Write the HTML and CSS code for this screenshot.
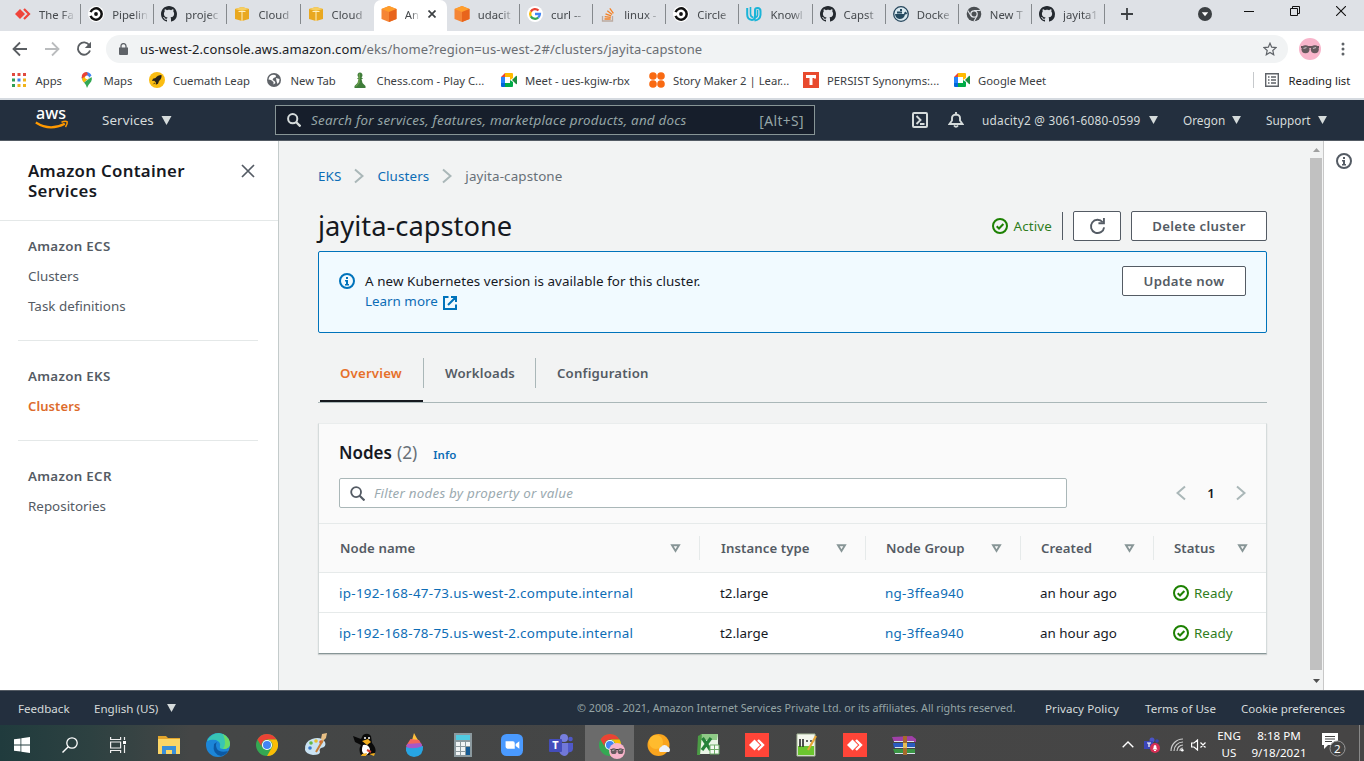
FILE: index.html
```html
<!DOCTYPE html>
<html lang="en">
<head>
<meta charset="utf-8">
<title>Amazon EKS - jayita-capstone</title>
<link rel="stylesheet" href="styles.css">
</head>
<body>
<svg class="defs" aria-hidden="true">
  <symbol id="github" viewBox="0 0 16 16"><path fill="#24292f" d="M8 0C3.58 0 0 3.58 0 8c0 3.54 2.29 6.53 5.47 7.59.4.07.55-.17.55-.38 0-.19-.01-.82-.01-1.49-2.01.37-2.53-.49-2.69-.94-.09-.23-.48-.94-.82-1.13-.28-.15-.68-.52-.01-.53.63-.01 1.08.58 1.23.82.72 1.21 1.87.87 2.33.66.07-.52.28-.87.51-1.07-1.78-.2-3.64-.89-3.64-3.95 0-.87.31-1.59.82-2.15-.08-.2-.36-1.02.08-2.12 0 0 .67-.21 2.2.82.64-.18 1.32-.27 2-.27s1.36.09 2 .27c1.53-1.04 2.2-.82 2.2-.82.44 1.1.16 1.92.08 2.12.51.56.82 1.27.82 2.15 0 3.07-1.87 3.75-3.65 3.95.29.25.54.73.54 1.48 0 1.07-.01 1.93-.01 2.2 0 .21.15.46.55.38A8.01 8.01 0 0 0 16 8c0-4.42-3.58-8-8-8z"/></symbol>
  <symbol id="circleci" viewBox="0 0 16 16"><circle cx="8" cy="8" r="8" fill="#fff"/><circle cx="8" cy="8" r="1.900" fill="#111"/><path d="M2.600 6.200a5.700 5.700 0 1 1 0 3.600" fill="none" stroke="#111" stroke-width="2.500"/></symbol>
  <symbol id="box" viewBox="0 0 16 16"><path fill="#e9a820" d="M1 3l7-2 7 2v10l-7 2-7-2z"/><path fill="#f6cf62" d="M1 3l7-2 7 2-7 2z"/><path d="M8 5v10M4.500 5.500h7" stroke="#fff0c0" stroke-width="1"/></symbol>
  <symbol id="cube" viewBox="0 0 16 16"><path fill="#f58536" d="M8 0l7.500 3v10L8 16 .5 13V3z"/><path fill="#ff9e2c" d="M8 0l7.500 3L8 6 .5 3z"/><path fill="#e8641b" d="M8 6l7.500-3v10L8 16z"/></symbol>
  <symbol id="meet" viewBox="0 0 16 14"><path fill="#1e8e3e" d="M11 7l4-4q1-.5 1 .5v7q0 1-1 .5z"/><path fill="#2684fc" d="M0 4h4v6H0z"/><path fill="#ea4335" d="M0 4l4-4v4z"/><path fill="#ffba00" d="M4 0h7q1 0 1 1v4l-3 2V4H4z"/><path fill="#00ac47" d="M4 10h5V7l3 2v4q0 1-1 1H4z"/><path fill="#0066da" d="M0 10h4v4H1q-1 0-1-1z"/></symbol>
  <symbol id="ok" viewBox="0 0 16 16"><circle cx="8" cy="8" r="7" fill="none" stroke="#1d8102" stroke-width="2"/><path d="M4.700 8.300l2.300 2.200 4.400-4.500" fill="none" stroke="#1d8102" stroke-width="2"/></symbol>
  <symbol id="info" viewBox="0 0 16 16"><circle cx="8" cy="8" r="7" fill="none" stroke="currentColor" stroke-width="2"/><path fill="currentColor" d="M7 4h2v2H7zM6 7h3v4h1v1.500H6V11h1V8.500H6z"/></symbol>
  <symbol id="sort" viewBox="0 0 10 9"><path d="M1.500 1.300h7L5 7z" fill="none" stroke="#879596" stroke-width="1.900"/></symbol>
  <symbol id="caret" viewBox="0 0 10 9"><path d="M0 0h10L5 9z" fill="#d5dbdb"/></symbol>
  <symbol id="right" viewBox="0 0 10 16"><path d="M1 1.500L8.500 8 1 14.500" fill="none" stroke="#aab7b8" stroke-width="2"/></symbol>
  <symbol id="chrome" viewBox="0 0 24 24"><circle cx="12" cy="12" r="12" fill="#34a853"/><path fill="#ea4335" d="M1.600 6A12 12 0 0 1 22.400 6H12a6 6 0 0 0-5.200 9z"/><path fill="#fbbc05" d="M22.400 6A12 12 0 0 1 12 24l5.200-9A6 6 0 0 0 12 6z"/><circle cx="12" cy="12" r="5.500" fill="#fff"/><circle cx="12" cy="12" r="4.400" fill="#4285f4"/></symbol>
  <symbol id="shades" viewBox="0 0 22 22"><circle cx="11" cy="11" r="11" fill="#f8b5cb"/><path d="M2 9h18" stroke="#3b3035" stroke-width="1.500"/><circle cx="6.500" cy="11.200" r="4" fill="#66595e"/><circle cx="15.800" cy="11.200" r="4" fill="#66595e"/><path d="M4.500 10.500l3-1M14 10.500l3-1" stroke="#c5bbc0" stroke-width="1.300"/></symbol>
  <symbol id="anydesk" viewBox="0 0 24 24"><path fill="#ff4538" d="M0 0h24v24H0z"/><path fill="#fff" d="M4 12l5.500-5.500L15 12l-5.500 5.500z"/><path d="M13 7l5 5-5 5" fill="none" stroke="#fff" stroke-width="2.400"/></symbol>
</svg>

<header class="tabstrip">
  <div class="tab"><svg class="fav" viewBox="0 0 16 16"><path fill="#ef443b" d="M0 8l5-5 5 5-5 5z"/><path d="M9 3l5 5-5 5" fill="none" stroke="#ef443b" stroke-width="2.200"/></svg><span>The Fa</span></div>
  <div class="tab"><svg class="fav"><use href="#circleci"/></svg><span>Pipelin</span></div>
  <div class="tab"><svg class="fav"><use href="#github"/></svg><span>projec</span></div>
  <div class="tab"><svg class="fav"><use href="#box"/></svg><span>Cloud</span></div>
  <div class="tab before-active"><svg class="fav"><use href="#box"/></svg><span>Cloud</span></div>
  <div class="tab active"><svg class="fav"><use href="#cube"/></svg><span>An</span><svg class="tab-close" viewBox="0 0 8 8"><path d="M.5.5l7 7M7.500.5l-7 7" stroke="#3c4043" stroke-width="1.700"/></svg></div>
  <div class="tab"><svg class="fav"><use href="#cube"/></svg><span>udacit</span></div>
  <div class="tab"><svg class="fav" viewBox="0 0 16 16"><circle cx="8" cy="8" r="8" fill="#fff"/><g fill="none" stroke-width="2.300"><path stroke="#ea4335" d="M3.800 5.600A4.900 4.900 0 0 1 11.500 4.500"/><path stroke="#fbbc05" d="M3.800 5.600a4.900 4.900 0 0 0 0 4.800"/><path stroke="#34a853" d="M3.800 10.400a4.900 4.900 0 0 0 7.400 1.200"/><path stroke="#4285f4" d="M11.200 11.600A4.900 4.900 0 0 0 12.900 8H8"/></g></svg><span>curl --</span></div>
  <div class="tab"><svg class="fav" viewBox="0 0 16 16"><path d="M2.500 10v5h10v-5" fill="none" stroke="#bcaaa0" stroke-width="1.300"/><path d="M4.500 13h6.200M4.700 10.600l6.100.8M5.500 7.800l5.700 2M7.300 4.800l4.800 3.800M9.800 2.300l3.600 5" stroke="#f48024" stroke-width="1.300"/></svg><span>linux -</span></div>
  <div class="tab"><svg class="fav"><use href="#circleci"/></svg><span>Circle</span></div>
  <div class="tab"><svg class="fav" viewBox="0 0 16 16"><path d="M1.200 2v6.500q0 5 4.800 5.500 3-.5 3-3V4q0-2 2.500-2 3 .2 3 3v4q-.5 5-6 5.500" fill="none" stroke="#1ab4d8" stroke-width="2"/><path d="M4.500 1v7q0 3 3 3.500M11.500 4v5q0 2-3 3" fill="none" stroke="#1ab4d8" stroke-width="1.600"/></svg><span>Knowl</span></div>
  <div class="tab"><svg class="fav"><use href="#github"/></svg><span>Capst</span></div>
  <div class="tab"><svg class="fav" viewBox="0 0 16 16"><circle cx="8" cy="8" r="7.300" fill="#d9e8ef" stroke="#27475d" stroke-width="1.300"/><path fill="#254a60" d="M2 8h9q0-2 1.500-2.500.5 1 2 1.500-1 1.500-2.500 1.500Q11 13 6.500 13 2.500 12.500 2 8zM4 5.500h5v2H4zM7 3h2v2H7z"/></svg><span>Docke</span></div>
  <div class="tab"><svg class="fav" viewBox="0 0 16 16"><circle cx="8" cy="8" r="7.300" fill="#4b4f53"/><circle cx="8" cy="8" r="3.200" fill="#4b4f53" stroke="#dee1e6" stroke-width="1.300"/><path d="M8 4.500h6.500M5 9.700L1.700 4.500M11 9.700L8 15.300" stroke="#dee1e6" stroke-width="1.200"/></svg><span>New T</span></div>
  <div class="tab"><svg class="fav"><use href="#github"/></svg><span>jayita1</span></div>
  <svg class="newtab" viewBox="0 0 12 12"><path d="M6 0v12M0 6h12" stroke="#3c4043" stroke-width="1.800"/></svg>
  <div class="winctl">
    <svg class="w14" viewBox="0 0 14 14"><circle cx="7" cy="7" r="7" fill="#3c4043"/><path fill="#fff" d="M3.800 5.200h6.400L7 9.300z"/></svg>
    <svg class="w10" viewBox="0 0 10 10"><path d="M0 5.500h10" stroke="#111"/></svg>
    <svg class="w10" viewBox="0 0 10 10"><path d="M.5 2.500h7v7h-7zM2.500 2.500v-2h7v7h-2" fill="none" stroke="#111"/></svg>
    <svg class="w10" viewBox="0 0 10 10"><path d="M0 0l10 10M10 0L0 10" stroke="#111" stroke-width="1.100"/></svg>
  </div>
</header>

<div class="toolbar">
  <div class="nav">
    <svg viewBox="0 0 16 16"><path d="M15 8H2M8 1.500L1.500 8 8 14.500" fill="none" stroke="#5a5e62" stroke-width="1.800"/></svg>
    <svg viewBox="0 0 16 16"><path d="M1 8h13M8 1.500L14.500 8 8 14.500" fill="none" stroke="#babcbe" stroke-width="1.800"/></svg>
    <svg viewBox="0 0 16 16"><path d="M13.200 4A6.200 6.200 0 1 0 14 9.500" fill="none" stroke="#5a5e62" stroke-width="1.900"/><path fill="#5a5e62" d="M15 .8V7H8.800z"/></svg>
  </div>
  <div class="omnibox">
    <svg class="lock" viewBox="0 0 9 12"><path fill="#5f6368" d="M0 4.500h9V11q0 1-1 1H1q-1 0-1-1z"/><path d="M2 5V3a2.500 2.400 0 0 1 5 0v2" fill="none" stroke="#5f6368" stroke-width="1.300"/></svg>
    <span class="url"><b>us-west-2.console.aws.amazon.com</b>/eks/home?region=us-west-2#/clusters/jayita-capstone</span>
    <svg class="star" viewBox="0 0 14 14"><path d="M7 1.200l1.700 4 4.300.4-3.200 2.900.9 4.200L7 10.500l-3.700 2.200.9-4.200L1 5.600l4.300-.4z" fill="none" stroke="#5f6368" stroke-width="1.200"/></svg>
  </div>
  <svg class="avatar"><use href="#shades"/></svg>
  <svg class="dots" viewBox="0 0 4 14"><circle cx="2" cy="2" r="1.500" fill="#5f6368"/><circle cx="2" cy="7" r="1.500" fill="#5f6368"/><circle cx="2" cy="12" r="1.500" fill="#5f6368"/></svg>
</div>

<nav class="bookmarks">
  <a><svg class="i14" viewBox="0 0 14 14"><path fill="#e04a3f" d="M0 0h3v3H0zM5.500 0h3v3h-3zM11 0h3v3h-3z"/><path fill="#2f9e54" d="M0 5.500h3v3H0zM0 11h3v3H0z"/><path fill="#3d7fe8" d="M5.500 5.500h3v3h-3z"/><path fill="#efb41c" d="M11 5.500h3v3h-3zM5.500 11h3v3h-3zM11 11h3v3h-3z"/></svg><span>Apps</span></a>
  <a><svg class="i14" viewBox="0 0 14 16"><path fill="#34a853" d="M7 16q-.5-3-3-5.500L11.500 5q1 2-.3 4.500Q8 13 7 16z"/><path fill="#4285f4" d="M6 0q4 0 5.500 3.500L4 10.500 1.500 6z"/><path fill="#ea4335" d="M1.700 5.500Q1.500.500 6.500 0L8 2 3 7z"/><path fill="#fbbc04" d="M2 6.500L6 4l3 2-5 4.500q-2-2-2-4z"/><circle cx="7" cy="5.300" r="1.900" fill="#fff"/></svg><span>Maps</span></a>
  <a><svg class="i16" viewBox="0 0 16 16"><circle cx="8" cy="8" r="8" fill="#fbbd12"/><path fill="#2a2418" d="M12.500 3q-4 0-6 3L4 6.700 3 9l2.200-.2 1.800 1.700-.2 2.300 2.200-1L10 9q3-2.500 2.500-6zM3.500 12.500l2.500-2 .5.7z"/></svg><span>Cuemath Leap</span></a>
  <a><svg class="i14" viewBox="0 0 14 14"><circle cx="7" cy="7" r="7" fill="#5f6368"/><path fill="#fff" d="M1.500 6.500Q2 2.500 6 1.700L8.500 2l.5 2-2.500 1-1 2 2 1 1 2-2 1.500V9L4 7zM9 5l3.500 1q.3 3-2 5L9.500 8z"/></svg><span>New Tab</span></a>
  <a><svg class="i14" viewBox="0 0 14 16"><path fill="#3f7d3a" d="M4.500 3a2.500 2.700 0 1 1 4 2.300L10 7H8.500l1 4 3 3v2h-11v-2l3-3 1-4H4l1.500-1.700Q4.500 4.500 4.500 3z"/><path fill="#8fba5c" d="M6 1.500l1 .5-.5 9-3 3.500H2l3-3z" opacity=".6"/></svg><span>Chess.com - Play C...</span></a>
  <a><svg class="i16"><use href="#meet"/></svg><span>Meet - ues-kgiw-rbx</span></a>
  <a><svg class="i16" viewBox="0 0 16 16" fill="#f96a12"><circle cx="4" cy="4" r="3.800"/><circle cx="12" cy="4" r="3.800"/><circle cx="4" cy="12" r="3.800"/><circle cx="12" cy="12" r="3.800"/></svg><span>Story Maker 2 | Lear...</span></a>
  <a><svg class="i16" viewBox="0 0 16 16"><path fill="#e84a2e" d="M0 0h16v16H0z"/><path fill="#fff" d="M3 3h10v3.500h-2V6H9.500v7h-3V6H3z"/></svg><span>PERSIST Synonyms:...</span></a>
  <a><svg class="i16"><use href="#meet"/></svg><span>Google Meet</span></a>
  <a class="reading"><svg class="i14" viewBox="0 0 14 14"><path d="M.7.7h12.600v12.600H.7z" fill="none" stroke="#5f6368" stroke-width="1.400"/><path d="M3 4h1.500M3 7h1.500M3 10h1.500M6 4h5M6 7h5M6 10h5" stroke="#5f6368" stroke-width="1.300"/></svg><span>Reading list</span></a>
</nav>

<div class="aws-nav">
  <svg class="aws-logo" viewBox="0 0 34 22"><text x="1" y="10" textLength="30" lengthAdjust="spacingAndGlyphs" class="aws-word">aws</text><path d="M.8 13.500q14 9 29 1.200" fill="none" stroke="#f90" stroke-width="2.100"/><path d="M26.500 13.200q4-1.500 5.700-.4.400 2.200-1.700 5.200" fill="none" stroke="#f90" stroke-width="1.500"/></svg>
  <span class="services">Services</span><svg class="caret big"><use href="#caret"/></svg>
  <div class="aws-search">
    <svg class="mag" viewBox="0 0 14 14"><circle cx="5.700" cy="5.700" r="4.600" fill="none" stroke="#d5dbdb" stroke-width="2"/><path d="M9 9l4.500 4.500" stroke="#d5dbdb" stroke-width="2.300"/></svg>
    <span>Search for services, features, marketplace products, and docs</span><kbd>[Alt+S]</kbd>
  </div>
  <svg class="shell" viewBox="0 0 16 16"><rect x="1" y="1" width="14" height="14" rx="1" fill="none" stroke="#d5dbdb" stroke-width="2"/><path d="M4.500 4l4 4-4 4M8 12h4.500" fill="none" stroke="#d5dbdb" stroke-width="1.900"/></svg>
  <svg class="bell" viewBox="0 0 16 16"><path d="M1.500 12h13L12 8.500V6q0-3-4-3.500Q4 3 4 6v2.500zM8 0v2.500M6 13.500q2 2.500 4 0" fill="none" stroke="#d5dbdb" stroke-width="1.900"/></svg>
  <div class="menu m1"><span>udacity2 @ 3061-6080-0599</span><svg class="caret"><use href="#caret"/></svg></div>
  <div class="menu m2"><span>Oregon</span><svg class="caret"><use href="#caret"/></svg></div>
  <div class="menu m3"><span>Support</span><svg class="caret"><use href="#caret"/></svg></div>
</div>

<div class="console">
  <aside class="sidebar">
    <div class="side-head"><h2>Amazon Container<br>Services</h2><svg viewBox="0 0 14 14"><path d="M1 1l12 12M13 1L1 13" stroke="#545b64" stroke-width="1.700"/></svg></div>
    <section><h3>Amazon ECS</h3><a>Clusters</a><a>Task definitions</a></section>
    <section><h3>Amazon EKS</h3><a class="current">Clusters</a></section>
    <section><h3>Amazon ECR</h3><a>Repositories</a></section>
  </aside>

  <main>
    <div class="crumbs"><a>EKS</a><svg><use href="#right"/></svg><a>Clusters</a><svg><use href="#right"/></svg><span>jayita-capstone</span></div>
    <div class="title-row">
      <h1>jayita-capstone</h1>
      <div class="status active-status"><svg><use href="#ok"/></svg><span>Active</span></div>
      <button class="btn refresh"><svg viewBox="0 0 18 18"><path d="M14.500 4.500A7 7 0 1 0 16 9.800" fill="none" stroke="#545b64" stroke-width="2"/><path d="M15.800 0v5.500H10" fill="none" stroke="#545b64" stroke-width="2"/></svg></button>
      <button class="btn delete"><span>Delete cluster</span></button>
    </div>
    <div class="alert">
      <svg class="alert-icon"><use href="#info"/></svg>
      <div class="alert-text"><p>A new Kubernetes version is available for this cluster.</p><a>Learn more<svg viewBox="0 0 16 16"><path d="M6.500 2H2v12h12V9.500M9 2h5v5M14 2L6 10" fill="none" stroke="#0073bb" stroke-width="2"/></svg></a></div>
      <button class="btn update"><span>Update now</span></button>
    </div>
    <div class="page-tabs"><div class="on">Overview</div><div>Workloads</div><div>Configuration</div></div>

    <div class="card">
      <div class="card-head">
        <div class="nodes"><h2>Nodes</h2><span class="count">(2)</span><a>Info</a></div>
        <div class="filter-row">
          <div class="filter"><svg viewBox="0 0 14 14"><circle cx="5.700" cy="5.700" r="4.600" fill="none" stroke="#545b64" stroke-width="1.700"/><path d="M9 9l4.500 4.500" stroke="#545b64" stroke-width="2"/></svg><span>Filter nodes by property or value</span></div>
          <div class="pager"><svg class="flip"><use href="#right"/></svg><b>1</b><svg><use href="#right"/></svg></div>
        </div>
      </div>
      <div class="row head">
        <div><span>Node name</span><svg><use href="#sort"/></svg></div><div><span>Instance type</span><svg><use href="#sort"/></svg></div><div><span>Node Group</span><svg><use href="#sort"/></svg></div><div><span>Created</span><svg><use href="#sort"/></svg></div><div><span>Status</span><svg><use href="#sort"/></svg></div>
      </div>
      <div class="row"><a>ip-192-168-47-73.us-west-2.compute.internal</a><div>t2.large</div><a>ng-3ffea940</a><div>an hour ago</div><div class="status"><svg><use href="#ok"/></svg><span>Ready</span></div></div>
      <div class="row"><a>ip-192-168-78-75.us-west-2.compute.internal</a><div>t2.large</div><a>ng-3ffea940</a><div>an hour ago</div><div class="status"><svg><use href="#ok"/></svg><span>Ready</span></div></div>
    </div>
  </main>
  <div class="scrollbar"><svg viewBox="0 0 7 4"><path fill="#a0a0a0" d="M0 4h7L3.500 0z"/></svg><div class="thumb"></div><svg viewBox="0 0 7 4"><path fill="#505050" d="M0 0h7L3.500 4z"/></svg></div>
  <div class="help"><svg><use href="#info"/></svg></div>
</div>

<footer class="aws-foot">
  <span class="f1">Feedback</span><span class="f2">English (US)</span><svg class="caret"><use href="#caret"/></svg>
  <span class="copy">© 2008 - 2021, Amazon Internet Services Private Ltd. or its affiliates. All rights reserved.</span>
  <span class="f3">Privacy Policy</span><span class="f4">Terms of Use</span><span class="f5">Cookie preferences</span>
</footer>

<div class="taskbar">
  <div class="sys">
    <svg class="t16" viewBox="0 0 16 16"><path fill="#fff" d="M0 2.300l6.500-.9v6.100H0zM7.300 1.300L16 0v7.500H7.300zM0 8.400h6.500v6.200L0 13.700zM7.300 8.400H16V16l-8.700-1.300z"/></svg>
    <svg class="t16" viewBox="0 0 16 16"><circle cx="10" cy="6" r="5.200" fill="none" stroke="#fff" stroke-width="1.300"/><path d="M6.300 9.800L.500 15.500" stroke="#fff" stroke-width="1.400"/></svg>
    <svg class="t16" viewBox="0 0 16 16"><path d="M.600 0v2.500h10V0M.6 16v-2.500h10V16M.6 5h10v6H.6zM14.500 0v3M14.500 8v8" fill="none" stroke="#eee" stroke-width="1.200"/><path fill="#fff" d="M13 4h3v3h-3z"/></svg>
  </div>
  <div class="apps">
    <div><svg viewBox="0 0 24 24"><path fill="#e2a52c" d="M1 3h8l2 2h12v4H1z"/><path fill="#fbd667" d="M1 6h22v15H1z"/><path fill="#3a8fd9" d="M5 13h14v8h-4v-4H9v4H5z"/></svg></div>
    <div><svg viewBox="0 0 24 24"><circle cx="12" cy="12" r="12" fill="#1c86d8"/><path fill="#38c5b4" d="M1 8Q5 0 13 0q9 1 11 10 0 6-7 6-4 0-3-3 1-4-4-6-5-1-9 1z"/><path fill="#6cdb66" d="M17 1q7 4 7 10 0 5-7 5 4-5 0-15z"/><path fill="#0c59a4" d="M8 11q-2 10 7 12 5-1 7-5-8 2-11-2-2-4 0-7z"/></svg></div>
    <div><svg class="a22"><use href="#chrome"/></svg></div>
    <div><svg viewBox="0 0 24 24"><path fill="#c9e2f2" d="M1 17Q0 9 8 6q9-3 13 3 2 5-4 6-2 1-1 4 0 3-7 3-7-1-8-5z"/><circle cx="7" cy="10" r="1.800" fill="#62b84a"/><circle cx="12" cy="8" r="1.800" fill="#e5bf2c"/><circle cx="17" cy="9" r="1.800" fill="#e35c35"/><circle cx="6" cy="15" r="1.800" fill="#3779cc"/><path d="M12 19l7-12" stroke="#c77c36" stroke-width="2"/><path fill="#e7bf85" d="M17 6l1-5 5-1-1 5-3 3z"/></svg></div>
    <div><svg viewBox="0 0 24 24"><path fill="#0a0a0a" d="M0 3l8 3 2-4q5-3 8 1l1 7q5 6 3 10l-4 2H8q-3-5 0-10L2 9z"/><path fill="#fff" d="M10 12q5-1 7 4-1 6-5 6-5-3-2-10z"/><path fill="#f2ae1e" d="M9 8l6-2 3 3-4 3zM9 21l5-1-1 3H8zM16 21l6-1-1 3z"/><circle cx="12" cy="5" r="1" fill="#fff"/><circle cx="16" cy="5" r="1" fill="#fff"/><path d="M14 17l4 2" stroke="#d43f31" stroke-width="2"/></svg></div>
    <div><svg viewBox="0 0 24 24"><path fill="#ffbf3b" d="M12 0q2 4 4 7l-8 3q3-4 4-10z"/><path fill="#f3655d" d="M8.500 6L17 7l3 5-14 3-2-2z"/><path fill="#a957c7" d="M5 11l14-1 2 5-17 3z"/><path fill="#27a5e3" d="M4 14q7 3 17-1 1 10-9 11-9-1-8-10z"/></svg></div>
    <div><svg viewBox="0 0 24 24"><path fill="#8b999e" d="M3 0h18v24H3z"/><path fill="#51cbe1" d="M5 2h14v5H5z"/><path fill="#f0f4f5" d="M5 9h4v4H5zM10 9h4v4h-4zM15 9h4v4h-4zM5 14h4v4H5zM10 14h4v4h-4zM5 19h4v3H5zM10 19h4v3h-4z"/><path fill="#155b94" d="M15 14h4v8h-4z"/></svg></div>
    <div><svg class="a22" viewBox="0 0 24 24"><rect width="24" height="24" rx="6" fill="#4a9aff"/><path fill="#fff" d="M5 8h8q2 0 2 2v6H7q-2 0-2-2zM16 11l4-3v8l-4-3z"/></svg></div>
    <div><svg viewBox="0 0 24 24"><circle cx="15" cy="5" r="4" fill="#777fdf"/><circle cx="21.500" cy="6" r="2.300" fill="#5059c9"/><path fill="#7178d9" d="M10 10h10v8q-1 5-5 5-4-1-5-5z"/><path fill="#5059c9" d="M19 10h5v6q-1 4-5 3z"/><rect y="6" width="13" height="13" rx="1" fill="#444dbb"/><text x="3.300" y="16" class="teams-t">T</text></svg></div>
    <div class="open"><svg class="a22"><use href="#chrome"/></svg><svg class="mini"><use href="#shades"/></svg></div>
    <div><svg viewBox="0 0 24 24"><circle cx="11.500" cy="12" r="11" fill="#f9a51e"/><circle cx="9" cy="9" r="7" fill="#ffbb2e"/><path fill="#edf3fa" d="M13 19a3 3 0 0 1 1-5 4 4 0 0 1 7 0 3 3 0 0 1 1 5z"/></svg></div>
    <div><svg viewBox="0 0 24 24"><path fill="#e9f5e6" d="M5 1h17v20H2z"/><path fill="#8fcb87" d="M5 1h17l-1 6H4z"/><path fill="#4b9c45" d="M2 3l4-2-2 21H1z"/><path d="M6.500 5l8 12M15 5L6 17" stroke="#26823a" stroke-width="3.200"/><path fill="#f4faf2" d="M14 12h9v9h-9z"/><path d="M14 12h9v9h-9zM14 16.500h9M18.500 12v9" fill="none" stroke="#6ead68"/></svg></div>
    <div><svg><use href="#anydesk"/></svg></div>
    <div><svg viewBox="0 0 24 24"><path fill="#f4f7ed" d="M3 1h18v22H3z"/><path fill="#6bc52e" d="M4 13h16v9H4z"/><path d="M3 1h18v22H3z" fill="none" stroke="#a9bb9b"/><path d="M6 6v8M9 6v8M12 8h2M16 8h2" stroke="#333" stroke-width="1.700"/><path d="M14 17l8-14" stroke="#e7a636" stroke-width="2.200"/></svg></div>
    <div><svg><use href="#anydesk"/></svg></div>
    <div><svg viewBox="0 0 24 24"><path fill="#a040a8" d="M0 4l20-1 4 3v3H2z"/><path fill="#2b5bc0" d="M1 10h22v5H2z"/><path fill="#3a9444" d="M1 16h22v5H3z"/><path d="M2 8.500h20M3 14.500h20M3 20.500h20" stroke="#d9e2ef" stroke-width="1.200"/><path fill="#a76a2b" d="M11 3h4v19h-4z"/><path fill="#e4bd56" d="M11 10h4v5h-4z"/></svg></div>
  </div>
  <div class="tray">
    <svg class="up" viewBox="0 0 12 7"><path d="M.7 6.300L6 1l5.300 5.300" fill="none" stroke="#fff" stroke-width="1.400"/></svg>
    <svg class="tm" viewBox="0 0 16 16"><circle cx="8" cy="3" r="2.500" fill="#4a54c8"/><circle cx="13" cy="4" r="1.800" fill="#3942ae"/><path fill="#3b46b8" d="M0 4h9v8H0z"/><path d="M3 6h4M5 6v4" stroke="#fff" stroke-width="1.200"/><circle cx="11" cy="11" r="5" fill="#d62f55"/><path fill="#fff" d="M8.500 12.500l1-1.500q0-3 1.500-3t1.500 3l1 1.500zM10 13h2v1h-2z"/></svg>
    <svg class="wifi" viewBox="0 0 14 14"><path d="M1 13A12 12 0 0 1 13 1M4 13a9 9 0 0 1 9-9M7 13a6 6 0 0 1 6-6M10 13a3 3 0 0 1 3-3" fill="none" stroke="#ccc" stroke-width="1.200"/><circle cx="12.300" cy="12.300" r="1.300" fill="#fff"/></svg>
    <svg class="vol" viewBox="0 0 15 12"><path d="M.6 4v4H3l3.500 3V1L3 4zM9.500 3.500l5 5M14.500 3.500l-5 5" fill="none" stroke="#fff" stroke-width="1.200"/></svg>
    <div class="lang">ENG<br>US</div>
    <div class="clock">8:18 PM<br>9/18/2021</div>
    <div class="notes"><svg viewBox="0 0 24 24"><path fill="#fff" d="M0 0h16v12H6l-4 4v-4H0z"/><path d="M3 3.500h10M3 6h10M3 8.500h7" stroke="#444" stroke-width="1.100"/><circle cx="15.500" cy="15.500" r="7.500" fill="#444" stroke="#999"/></svg><span>2</span></div>
    <div class="peek"></div>
  </div>
</div>
</body>
</html>
```
FILE: styles.css
```css
* { box-sizing: border-box; }
body { margin: 0; width: 1364px; height: 761px; overflow: hidden; display: flex; flex-direction: column; font-family: "Noto Sans", "Open Sans", sans-serif; font-size: 13.4px; color: #16191f; background: #fff; }
h1, h2, h3, p { margin: 0; }
svg { display: block; flex: none; }
.defs { width: 0; height: 0; position: absolute; }
a { color: #0d6db6; }
span, a, h1, h2, h3, p { white-space: nowrap; }

/* browser tabs */
.tabstrip { height: 31px; flex: none; background: #dee1e6; display: flex; padding-left: 8px; }
.tab { width: 73.150px; height: 31px; display: flex; align-items: center; padding: 0 0 3px 7px; gap: 8px; position: relative; font-size: 11.300px; color: #45494d; flex: none; }
.tab::after { content: ""; width: 1px; height: 20px; background: #85898d; position: absolute; right: 0; top: 4px; }
.tab.active::after, .tab.before-active::after { display: none; }
.tab span { width: 40px; -webkit-mask-image: linear-gradient(90deg, #000 55%, transparent 92%); mask-image: linear-gradient(90deg, #000 55%, transparent 92%); }
.tab.active { background: #fff; border-radius: 7px 7px 0 0; }
.tab.active span { width: 15px; -webkit-mask-image: linear-gradient(90deg, #000 40%, transparent); mask-image: linear-gradient(90deg, #000 40%, transparent); }
.fav { width: 16px; height: 16px; }
.tab-close { width: 8px; height: 8px; }
.newtab { width: 12px; height: 12px; margin: 8px 0 0 15.500px; }
.winctl { margin-left: auto; display: flex; align-items: center; height: 22px; padding-right: 18px; gap: 36px; }
.w14 { width: 14px; height: 14px; margin-top: 6px; margin-right: -4px; }
.w10 { width: 10px; height: 10px; }

/* address bar */
.toolbar { height: 33px; flex: none; display: flex; align-items: center; padding: 3px 0 0 12px; }
.nav { display: flex; gap: 16px; width: 94px; }
.nav svg { width: 16px; height: 16px; }
.omnibox { width: 1182px; height: 28px; border-radius: 14px; background: #f1f3f4; display: flex; align-items: center; padding: 0 11px 0 13px; }
.lock { width: 9px; height: 12px; }
.url { margin-left: 12px; flex: 1; font-size: 13px; letter-spacing: .11px; color: #6a6e73; }
.url b { font-weight: 400; color: #202124; }
.star { width: 14px; height: 14px; }
.avatar { width: 22px; height: 22px; margin-left: 11px; }
.dots { width: 4px; height: 14px; margin-left: 20px; }

/* bookmarks */
.bookmarks { height: 36px; flex: none; border-bottom: 2px solid #d5dae0; display: grid; grid-template-columns: 68px 69px 118px 86px 148px 148px 154px 151px 1fr 111px; padding: 0 0 2px 12px; align-items: center; font-size: 11.300px; }
.bookmarks a { display: flex; align-items: center; color: #3c4043; }
.i14 { width: 14px; height: 16px; margin-right: 9.500px; }
.i16 { width: 16px; height: 16px; margin-right: 8px; }
.bookmarks .reading { border-left: 1px solid #c6c9cc; padding-left: 11px; height: 16px; color: #222; }

/* console header */
.aws-nav { height: 41px; flex: none; background: #232f3e; border-bottom: 1px solid #545b64; display: flex; align-items: center; color: #d5dbdb; }
.aws-logo { width: 34px; height: 22px; margin-left: 35px; }
.aws-word { font: 500 15.500px "Noto Sans", sans-serif; fill: #fff; }
.services { margin-left: 33px; width: 52px; font-size: 13.400px; letter-spacing: .1px; }
.caret { width: 9px; height: 8px; }
.caret.big { width: 11px; height: 9px; margin-left: 7px; }
.aws-search { margin-left: 103px; width: 540px; height: 30px; border: 1px solid #879596; background: #161e2b; display: flex; align-items: center; padding: 0 10px 0 11px; color: #95a5a6; font-style: italic; letter-spacing: .22px; }
.mag { width: 14px; height: 14px; margin-right: 10px; }
.aws-search kbd { margin-left: auto; font: normal 13.800px "Noto Sans", sans-serif; letter-spacing: .4px; }
.shell { width: 16px; height: 16px; margin-left: 97px; }
.bell { width: 16px; height: 16px; margin-left: 20px; }
.menu { display: flex; align-items: center; justify-content: space-between; font-size: 11.800px; }
.m1 { width: 176px; margin-left: 18px; letter-spacing: .25px; }
.m2 { width: 58px; margin-left: 25px; }
.m3 { width: 61px; margin-left: 25px; }

/* console body */
.console { height: 549px; flex: none; display: flex; }
.sidebar { width: 279px; border-right: 1px solid #c4cbcb; color: #545b64; }
.side-head { height: 80px; border-bottom: 1px solid #e4e8e8; padding: 20px 23px 0 28px; display: flex; justify-content: space-between; }
.side-head h2 { font-size: 16.800px; letter-spacing: .32px; line-height: 20px; font-weight: 600; color: #16191f; }
.side-head svg { width: 14px; height: 14px; margin-top: 3px; }
.sidebar section { margin: 0 20px 0 18px; padding: 10px 0 19px 10px; border-bottom: 1px solid #e4e8e8; display: flex; flex-direction: column; line-height: 30px; }
.sidebar section + section { padding-top: 20px; }
.sidebar section:last-child { border: 0; }
.sidebar h3 { font-size: 13.300px; letter-spacing: .33px; font-weight: 600; }
.sidebar section a { color: #545b64; }
.sidebar section a.current { color: #dd6b2c; font-weight: 600; font-size: 13px; letter-spacing: .1px; }
main { width: 1030px; background: #f2f3f3; padding: 25px 42px 0 39px; }
.crumbs { height: 20px; display: flex; align-items: center; letter-spacing: .12px; }
.crumbs svg { width: 10px; height: 16px; margin: 0 13px; }
.crumbs span { color: #687078; }
.title-row { margin-top: 24px; height: 32px; display: flex; align-items: center; }
h1 { font-size: 27.300px; font-weight: 400; flex: 1; line-height: 31px; padding-bottom: 1px; }
.status { display: flex; align-items: center; gap: 5px; color: #2f7d1c; }
.status svg { width: 16px; height: 16px; }
.active-status { height: 28px; padding-right: 10px; border-right: 1px solid #545b64; margin-right: 10px; letter-spacing: .15px; }
.btn { height: 30px; border: 1px solid #545b64; border-radius: 2px; background: #fff; color: #545b64; font: 600 13.200px "Noto Sans", sans-serif; letter-spacing: .3px; padding: 0; display: flex; align-items: center; justify-content: center; }
.refresh { width: 48px; margin-right: 10px; }
.refresh svg { width: 17px; height: 17px; }
.delete { width: 136px; }
.alert { margin-top: 9px; height: 82px; border: 1px solid #0073bb; border-radius: 2px; background: #f1faff; display: flex; padding: 14px 20px; }
.alert-icon { width: 16px; height: 16px; color: #0073bb; margin-top: 7px; }
.alert-text { margin: 5px 0 0 10px; flex: 1; line-height: 20px; letter-spacing: .07px; }
.alert-text a { display: flex; align-items: center; letter-spacing: 0; }
.alert-text a svg { width: 16px; height: 16px; margin: 4px 0 0 4px; }
.update { width: 124px; }
.page-tabs { height: 52px; margin: 18px 0 20px; border-bottom: 1px solid #aab7b8; display: flex; padding-left: 2px; font-weight: 600; font-size: 13.200px; letter-spacing: .2px; color: #545b64; }
.page-tabs div { height: 52px; line-height: 44px; position: relative; padding: 0 0 0 21px; width: 112px; }
.page-tabs .on { width: 104px; padding-left: 20px; color: #e6702a; }
.page-tabs div:not(:last-child)::after { content: ""; position: absolute; right: 0; top: 7px; width: 1px; height: 30px; background: #aab7b8; }
.page-tabs .on::before { content: ""; position: absolute; left: 0; right: 1px; bottom: 1px; height: 2px; background: #16191f; }

/* nodes table */
.card { height: 231px; border: 1px solid #d5dbdb; border-top-color: #eaeded; border-bottom: 1px solid #879596; background: #fff; box-shadow: 0 1px 1px #ccd0d0; }
.card-head { height: 100px; background: #fafafa; border-bottom: 1px solid #e6eaea; padding: 15px 20px 0; }
.nodes { height: 28px; display: flex; align-items: baseline; }
.nodes h2 { font-size: 17px; font-weight: 600; line-height: 28px; }
.nodes .count { font-size: 17.400px; color: #687078; margin-left: 5px; }
.nodes a { font-size: 11.500px; font-weight: 600; margin-left: 16px; }
.filter-row { display: flex; margin-top: 11px; align-items: center; }
.filter { width: 728px; height: 30px; border: 1px solid #aab7b8; border-radius: 2px; background: #fff; display: flex; align-items: center; padding-left: 10px; color: #9baab0; font-style: italic; font-size: 13.400px; letter-spacing: .22px; }
.filter svg { width: 15px; height: 15px; margin-right: 9px; }
.pager { display: flex; align-items: center; margin-left: 109px; width: 70px; justify-content: space-between; font-size: 13px; }
.pager b { font-weight: 600; }
.pager svg { width: 10px; height: 16px; }
.flip { transform: scaleX(-1); }
.row { display: grid; grid-template-columns: 381px 166px 155px 133px 1fr; height: 40px; align-items: center; border-bottom: 1px solid #e6eaea; }
.row:last-child { border: 0; }
.row > * { padding-left: 20px; }
.row > :nth-child(n+3) { padding-left: 19px; }
.row > a { letter-spacing: .3px; }
.row.head { height: 49px; background: #fafafa; font-weight: 600; font-size: 13.200px; letter-spacing: .08px; color: #545b64; }
.row.head > div { display: flex; align-items: center; justify-content: space-between; padding: 0 18.500px 0 21px; height: 24px; border-right: 1px solid #e6eaea; }
.row.head > div:nth-child(n+3) { padding-left: 20px; }
.row.head > div:last-child { border: 0; }
.head svg { width: 11px; height: 9px; }
.scrollbar { width: 15px; background: #f2f3f3; border-right: 1px solid #c8c8c8; display: flex; flex-direction: column; align-items: center; padding: 7px 0; }
.scrollbar svg { width: 7px; height: 4px; }
.thumb { width: 12px; height: 512px; background: #c1c1c1; margin: 6px 0 9px; }
.help { flex: 1; color: #545b64; padding: 12px 0 0 12px; }
.help svg { width: 16px; height: 16px; }

/* console footer */
.aws-foot { height: 35px; flex: none; background: #232f3e; border-top: 1px solid #545b64; display: flex; align-items: center; color: #d5dbdb; font-size: 11.600px; }
.f1 { margin-left: 18px; width: 76px; }
.f2 { width: 73px; }
.copy { font-size: 10.750px; color: #95a5a6; margin-left: 401px; width: 468px; }
.f3 { width: 100px; letter-spacing: .06px; }
.f4 { width: 96px; }
.f5 { font-size: 11.500px; }

/* taskbar */
.taskbar { flex: 1; display: flex; background: linear-gradient(90deg, #203b3d 0, #2d4141 90px, #444646 190px, #464545 100%); color: #fff; }
.sys { display: flex; align-items: center; width: 144px; padding: 3px 0 0 14px; gap: 32px; }
.t16 { width: 16px; height: 16px; }
.apps { display: flex; }
.apps > div { width: 49px; display: flex; align-items: center; justify-content: center; position: relative; padding-top: 3px; }
.apps svg { width: 24px; height: 24px; }
.apps svg.a22 { width: 22px; height: 22px; }
.apps .open { background: #6b6b6b; }
.apps svg.mini { position: absolute; right: 9px; bottom: 2px; width: 16px; height: 16px; }
.teams-t { font: 700 11px "Noto Sans", sans-serif; fill: #fff; }
.tray { margin-left: auto; display: flex; align-items: center; padding-top: 3px; font-size: 11.600px; line-height: 17px; text-align: center; }
.up { width: 12px; height: 7px; }
.tm { width: 16px; height: 16px; margin-left: 10px; }
.wifi { width: 14px; height: 14px; margin-left: 10px; }
.vol { width: 15px; height: 12px; margin-left: 7px; }
.lang, .clock { margin-top: -2px; }
.lang { width: 40px; margin-left: 3px; }
.clock { width: 60px; }
.notes { width: 24px; height: 24px; margin-left: 13px; position: relative; }
.notes svg { width: 24px; height: 24px; }
.notes span { position: absolute; left: 12px; top: 7px; }
.peek { width: 1px; height: 36px; background: #888; margin: -3px 4px 0 13px; }
```
